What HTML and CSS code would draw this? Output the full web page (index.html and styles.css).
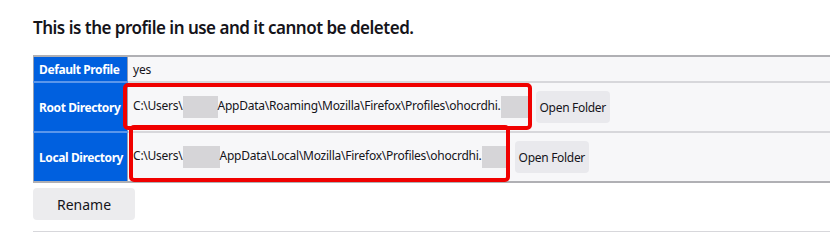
FILE: index.html
```html
<!DOCTYPE html>
<html lang="en">
<head>
  <meta charset="UTF-8">
  <title>Profile</title>
  <link rel="stylesheet" href="styles.css">
</head>
<body>
  <div class="profile">
    <h2 class="profile-note">This is the profile in use and it cannot be deleted.</h2>

    <div class="table-wrap">
      <table class="profile-table">
        <tr class="row-short">
          <th>Default Profile</th>
          <td>yes</td>
        </tr>
        <tr>
          <th>Root Directory</th>
          <td>C:\Users\<span class="blur blur-user"></span>AppData\Roaming\Mozilla\Firefox\Profiles\ohocrdhi.<span class="blur blur-id"></span><button class="folder-button">Open Folder</button></td>
        </tr>
        <tr>
          <th>Local Directory</th>
          <td>C:\Users\<span class="blur blur-user2"></span>AppData\Local\Mozilla\Firefox\Profiles\ohocrdhi.<span class="blur blur-id2"></span><button class="folder-button">Open Folder</button></td>
        </tr>
      </table>
      <div class="mark mark-root"></div>
      <div class="mark mark-local"></div>
    </div>

    <button class="rename-button">Rename</button>
    <div class="line"></div>
  </div>
</body>
</html>
```

FILE: styles.css
```css
body{
  margin: 0;
  font-family: "Noto Sans", sans-serif;
  background-color: white;
  color: rgb(21, 20, 26);
  overflow: hidden;
}

.profile{
  padding: 16px 0 0 33px;
}

h2.profile-note{
  font-size: 17px;
  line-height: 23px;
  font-weight: 600;
  margin: 0 0 16px 0;
  letter-spacing: -0.5px;
}

.table-wrap{
  position: relative;
}

table.profile-table{
  border-collapse: collapse;
  width: 810px;
  border-top: 2px solid rgb(176, 176, 180);
  border-bottom: 2px solid rgb(176, 176, 180);
  border-left: 1px solid rgb(150, 160, 180);
  font-size: 12px;
}

.profile-table th{
  background-color: rgb(0, 96, 223);
  color: white;
  font-weight: 700;
  text-align: left;
  white-space: nowrap;
  width: 84px;
  padding: 0 4px 0 5px;
  letter-spacing: -0.4px;
  border-bottom: 2px solid rgb(90, 150, 235);
  border-right: 1px solid rgb(150, 160, 180);
}

.profile-table td{
  background-color: rgb(247, 247, 249);
  height: 48px;
  padding: 0 0 0 5px;
  white-space: nowrap;
  border-bottom: 2px solid rgb(215, 215, 219);
  letter-spacing: -0.25px;
}

.profile-table tr:last-child td,
.profile-table tr:last-child th{
  border-bottom: none;
}

.profile-table tr.row-short td{
  height: 24px;
}

.blur{
  display: inline-block;
  vertical-align: middle;
  height: 22px;
  background-color: rgb(214, 213, 216);
}

.blur-user{ width: 35px; }
.blur-id{ width: 30px; }
.blur-user2{ width: 37px; }
.blur-id2{ width: 28px; }

button.folder-button{
  font-family: "Noto Sans", sans-serif;
  font-size: 12px;
  color: rgb(21, 20, 26);
  background-color: rgb(233, 233, 237);
  border: none;
  border-radius: 4px;
  padding: 0 4px;
  height: 32px;
  margin-left: 5px;
  vertical-align: middle;
  letter-spacing: -0.3px;
}

.mark{
  position: absolute;
  border: 4px solid rgb(240, 0, 0);
  border-radius: 5px;
  box-sizing: border-box;
}

.mark-root{
  left: 90px;
  top: 28px;
  width: 409px;
  height: 47px;
}

.mark-local{
  left: 96px;
  top: 70px;
  width: 381px;
  height: 57px;
}

button.rename-button{
  display: block;
  margin-top: 5px;
  width: 102px;
  height: 32px;
  border: none;
  border-radius: 4px;
  background-color: rgb(236, 236, 238);
  color: rgb(21, 20, 26);
  font-family: "Noto Sans", sans-serif;
  font-size: 14px;
}

.line{
  margin-top: 11px;
  height: 1px;
  background-color: rgb(215, 215, 219);
}
```
